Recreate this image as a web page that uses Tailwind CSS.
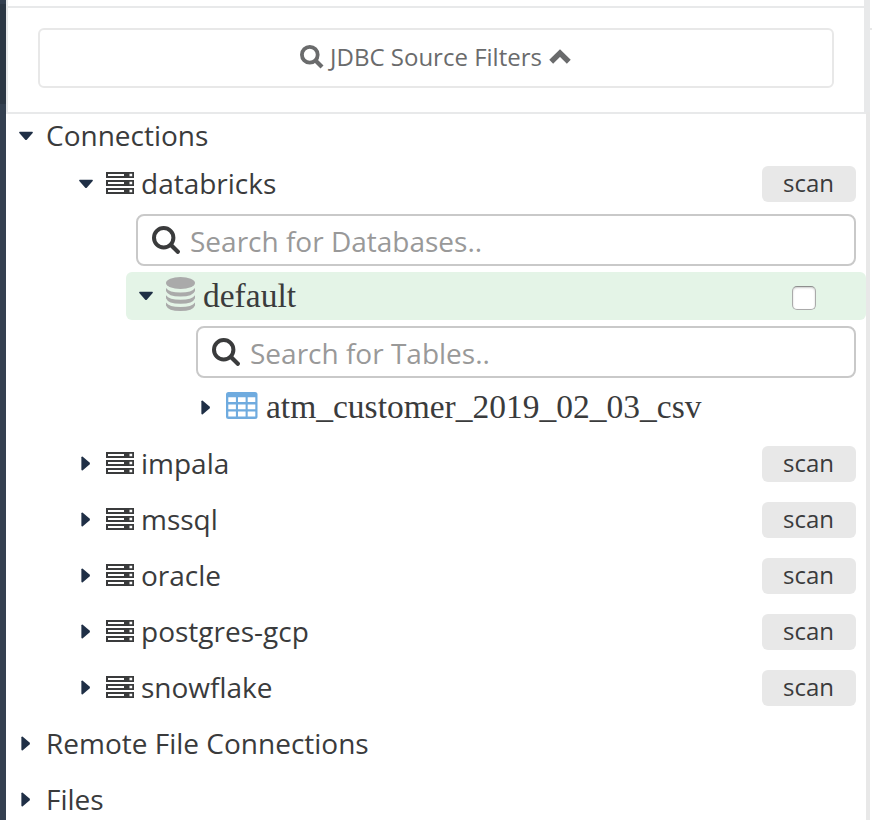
<!DOCTYPE html>
<html lang="en">
<head>
<meta charset="utf-8">
<title>Connections</title>
<script src="https://cdn.jsdelivr.net/npm/@tailwindcss/browser@4"></script>
</head>
<body class="bg-white">
<svg class="hidden" xmlns="http://www.w3.org/2000/svg">
  <symbol id="down" viewBox="0 0 16 10"><path d="M1.700.8h12.600q1 .4.4 1.200L9 8.600q-1 1-2 0L1.300 2Q.7 1.200 1.700.8z" fill="#1f2f46"/></symbol>
  <symbol id="right" viewBox="0 0 10 16"><path d="M.4 2.300v12.400q.4 1.100 1.400.5L8.500 9.500q1-1 0-2L1.800 1.700Q.8 1.100.4 2.300z" fill="#1f2f46"/></symbol>
  <symbol id="server" viewBox="0 0 28 22"><path fill="#3a3b3c" d="M0 0h28v6H0zM0 8h28v6H0zM0 16h28v6H0z"/><path fill="#fff" d="M2 2h16v2H2zM2 10h16v2H2zM2 18h16v2H2zM23.500 1.700h2.700v2.600h-2.700zM23.500 9.700h2.700v2.600h-2.700zM23.500 17.700h2.700v2.600h-2.700z"/></symbol>
  <symbol id="search" viewBox="0 0 28 28"><circle cx="11.700" cy="11.700" r="9.700" fill="none" stroke="currentColor" stroke-width="4"/><path d="M19 19l6.800 6.800" stroke="currentColor" stroke-width="4.200" stroke-linecap="round"/></symbol>
  <symbol id="search-bold" viewBox="0 0 24 24"><circle cx="9.800" cy="9.800" r="7.900" fill="none" stroke="currentColor" stroke-width="3.800"/><path d="M15.500 15.500l6.500 6.500" stroke="currentColor" stroke-width="4.200"/></symbol>
</svg>
<div class="flex h-[820px] w-[872px] overflow-hidden font-['Open_Sans',sans-serif] text-[28px] text-[#3a3b3c]">
  <aside class="flex w-1.5 shrink-0 flex-col bg-[#344050]">
    <div class="h-1 bg-[#344050]"></div>
    <div class="h-[100px] bg-[#2c3744]"></div>
  </aside>
  <main class="flex w-[860px] shrink-0 flex-col">
    <div class="h-2 shrink-0 border-b-2 border-l-2 border-[#e8e9ea]"></div>
    <section class="h-[106px] w-[860px] shrink-0 border-b-2 border-l-2 border-[#e8e9ea] px-[30px] pt-5">
      <button class="flex h-[60px] w-[796px] items-center justify-center rounded-md border-2 border-[#e8e8e8] pb-0.5 text-2xl text-[#6a6b6c]">
        <svg class="mr-1.5 size-6"><use href="#search-bold"/></svg>
        <span class="whitespace-nowrap">JDBC Source Filters</span>
        <svg class="mr-px ml-[7px] h-4 w-[22px]" viewBox="0 0 22 16"><path d="M2.200 12.700L11 4l8.800 8.700" fill="none" stroke="currentColor" stroke-width="5.500"/></svg>
      </button>
    </section>
    <div class="flex h-11 shrink-0 items-center pb-0.5 pl-3"><svg class="mt-0.5 mr-3 h-2.5 w-4"><use href="#down"/></svg><span>Connections</span></div>
    <div class="flex h-[52px] shrink-0 items-center pr-2.5 pb-0.5 pl-[72px]"><svg class="mt-0.5 mr-3 h-2.5 w-4"><use href="#down"/></svg><svg class="mr-[7px] h-[22px] w-7"><use href="#server"/></svg><span>databricks</span><button class="mt-0.5 ml-auto h-9 w-[94px] rounded-md bg-[#e8e8e8] pr-px pb-0.5 text-2xl">scan</button></div>
    <label class="mt-1 mr-2.5 ml-[130px] flex h-[52px] shrink-0 items-center rounded-lg border-2 border-[#c9c9c9] pl-3.5"><svg class="mr-2.5 size-7"><use href="#search"/></svg><input class="mt-0.5 min-w-0 flex-1 bg-transparent outline-none placeholder:text-[#999]" placeholder="Search for Databases.."></label>
    <div class="mt-1.5 ml-[120px] flex h-12 shrink-0 items-center rounded-md bg-[#e4f4e7] pl-3">
      <svg class="mr-3 h-2.5 w-4"><use href="#down"/></svg>
      <svg class="mr-2 h-[34px] w-[29px] -translate-y-[2px]" viewBox="0 0 29 34" fill="#aaa"><ellipse cx="14.500" cy="6" rx="14.500" ry="6"/><path d="M0 11q3 4.500 14.500 4.500T29 11v3q-2 5.500-14.500 5.500T0 14zM0 18.200q3 4.500 14.500 4.500T29 18.200v3q-2 5.500-14.500 5.500T0 21.200zM0 25.400q3 4.500 14.500 4.500T29 25.400v3q-2 5.500-14.500 5.500T0 28.400z"/></svg>
      <span class="font-['Liberation_Serif',serif] text-[33.5px]">default</span>
      <input type="checkbox" class="mt-1 mr-[50px] ml-auto size-6 appearance-none rounded-[5px] border border-[#aaa] border-t-[#8e8e8e] bg-white shadow-[inset_0_1px_2px_#ccc]">
    </div>
    <label class="mt-1.5 mr-2.5 ml-[190px] flex h-[52px] shrink-0 items-center rounded-lg border-2 border-[#c9c9c9] pl-3.5"><svg class="mr-2.5 size-7"><use href="#search"/></svg><input class="mt-0.5 min-w-0 flex-1 bg-transparent outline-none placeholder:text-[#999]" placeholder="Search for Tables.."></label>
    <div class="flex h-[58px] shrink-0 items-center pl-[195px]"><svg class="mr-[15px] h-4 w-2.5"><use href="#right"/></svg>
      <svg class="mr-2 h-[27px] w-8 -translate-y-[2px]" viewBox="0 0 32 27"><rect x="0" y="0" width="31.500" height="27" rx="2.500" fill="#6fabdf"/><path fill="#fff" d="M2.300 5.200h7.600v4.800H2.300zM12 5.200h7.600v4.800H12zM21.700 5.200h7.600v4.800h-7.600zM2.300 12.400h7.600v4.800H2.300zM12 12.400h7.600v4.800H12zM21.700 12.400h7.600v4.800h-7.600zM2.300 19.600h7.600v4.800H2.300zM12 19.600h7.600v4.800H12zM21.700 19.600h7.600v4.800h-7.600z"/></svg>
      <span class="mt-px font-['Liberation_Serif',serif] text-[33.5px]">atm_customer_2019_02_03_csv</span></div>
    <div class="flex h-14 shrink-0 items-center pr-2.5 pb-0.5 pl-[75px]"><svg class="mr-[15px] h-4 w-2.5"><use href="#right"/></svg><svg class="mr-[7px] h-[22px] w-7"><use href="#server"/></svg><span>impala</span><button class="mt-0.5 ml-auto h-9 w-[94px] rounded-md bg-[#e8e8e8] pr-px pb-0.5 text-2xl">scan</button></div>
    <div class="flex h-14 shrink-0 items-center pr-2.5 pb-0.5 pl-[75px]"><svg class="mr-[15px] h-4 w-2.5"><use href="#right"/></svg><svg class="mr-[7px] h-[22px] w-7"><use href="#server"/></svg><span>mssql</span><button class="mt-0.5 ml-auto h-9 w-[94px] rounded-md bg-[#e8e8e8] pr-px pb-0.5 text-2xl">scan</button></div>
    <div class="flex h-14 shrink-0 items-center pr-2.5 pb-0.5 pl-[75px]"><svg class="mr-[15px] h-4 w-2.5"><use href="#right"/></svg><svg class="mr-[7px] h-[22px] w-7"><use href="#server"/></svg><span>oracle</span><button class="mt-0.5 ml-auto h-9 w-[94px] rounded-md bg-[#e8e8e8] pr-px pb-0.5 text-2xl">scan</button></div>
    <div class="flex h-14 shrink-0 items-center pr-2.5 pb-0.5 pl-[75px]"><svg class="mr-[15px] h-4 w-2.5"><use href="#right"/></svg><svg class="mr-[7px] h-[22px] w-7"><use href="#server"/></svg><span>postgres-gcp</span><button class="mt-0.5 ml-auto h-9 w-[94px] rounded-md bg-[#e8e8e8] pr-px pb-0.5 text-2xl">scan</button></div>
    <div class="flex h-14 shrink-0 items-center pr-2.5 pb-0.5 pl-[75px]"><svg class="mr-[15px] h-4 w-2.5"><use href="#right"/></svg><svg class="mr-[7px] h-[22px] w-7"><use href="#server"/></svg><span>snowflake</span><button class="mt-0.5 ml-auto h-9 w-[94px] rounded-md bg-[#e8e8e8] pr-px pb-0.5 text-2xl">scan</button></div>
    <div class="flex h-14 shrink-0 items-center pb-0.5 pl-[15px]"><svg class="mr-[15px] h-4 w-2.5"><use href="#right"/></svg><span>Remote File Connections</span></div>
    <div class="flex h-14 shrink-0 items-center pb-0.5 pl-[15px]"><svg class="mr-[15px] h-4 w-2.5"><use href="#right"/></svg><span>Files</span></div>
  </main>
  <div class="-ml-0.5 flex w-1.5 shrink-0 flex-col items-end">
    <div class="h-[112px] w-1.5 shrink-0 bg-[#e8e9ea]"></div>
    <div class="w-1 flex-1 bg-[#e8e8e8]"></div>
  </div>
  <div class="h-[30px] w-0.5 shrink-0 border-b-2 border-[#e8e8e8]"></div>
</div>
</body>
</html>
